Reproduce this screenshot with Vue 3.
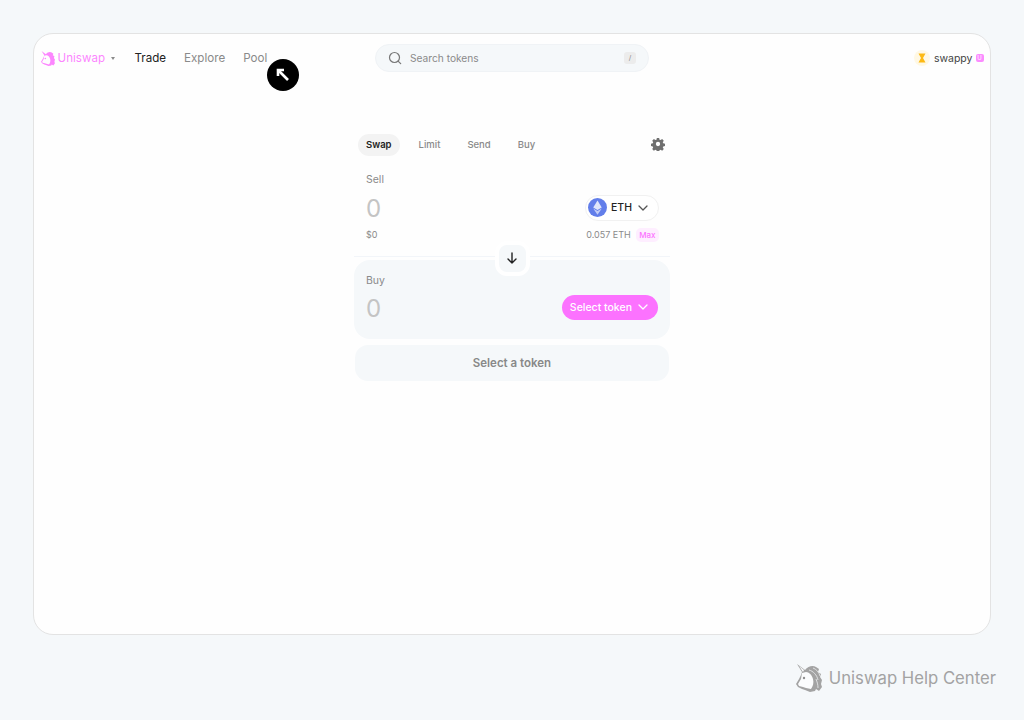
<script setup>
const tabs = ["Swap", "Limit", "Send", "Buy"];
</script>

<template>
  <div class="page">
    <div class="window">
      <header class="topbar">
        <nav class="nav">
          <div class="brand">
            <svg class="brand-logo" viewBox="0 0 26 28" width="14" height="15">
              <path fill="#fc72ff" d="M1 0l8 6c3-4 8-5 11-3l3 2-1 3 3 2-1 3 2 3-1 4 1 3-3 4-3-2-1 2-5 1-5-2-3-1-4-2-2-3 3-5 2-4 1-3z" />
              <path fill="#fff" d="M6 9l4-1c3 0 6 3 7 7 1 4 0 7-2 10l-5-1-3-1-4-1-1-2 3-5z" />
              <circle cx="8" cy="14" r="1.500" fill="#fc72ff" />
            </svg>
            <span>Uniswap</span>
            <i class="caret"></i>
          </div>
          <a class="nav-link active">Trade</a>
          <a class="nav-link">Explore</a>
          <a class="nav-link">Pool</a>
        </nav>

        <div class="search">
          <svg viewBox="0 0 14 14" width="14" height="14" fill="none" stroke="#777" stroke-width="1.200" stroke-linecap="round">
            <circle cx="6.500" cy="6.500" r="5" />
            <path d="M10.300 10.300l2.400 2.400" />
          </svg>
          <span class="search-text">Search tokens</span>
          <span class="slash">/</span>
        </div>

        <div class="account">
          <span class="avatar">
            <svg viewBox="0 0 16 16" width="16" height="16">
              <circle cx="8" cy="8" r="8" fill="#fff8e4" />
              <path d="M4.500 3.500h7L9 8l2.500 4.500h-7L7 8z" fill="#fdb913" />
            </svg>
          </span>
          <span class="account-name">swappy</span>
          <span class="u-badge">U</span>
        </div>
      </header>

      <!-- mouse pointer from the tutorial -->
      <div class="pointer">
        <svg viewBox="0 0 32 32" width="32" height="32" fill="none" stroke="#fff" stroke-width="2.600">
          <path d="M11 17v-6h6" />
          <path d="M11 11l10 10" />
        </svg>
      </div>

      <main class="swap">
        <div class="tabs">
          <span v-for="(t, i) in tabs" :key="t" class="tab" :class="{ selected: i === 0 }">{{ t }}</span>
          <svg class="gear" viewBox="0 0 24 24" width="14" height="14">
            <path fill="#6f6f6f" fill-rule="evenodd" d="M10 1.500h4l.6 3 1.900.8 2.600-1.700 2.800 2.800-1.700 2.600.8 1.900 3 .6v4l-3 .6-.8 1.900 1.700 2.600-2.800 2.800-2.600-1.700-1.900.8-.6 3h-4l-.6-3-1.900-.8-2.600 1.700-2.800-2.800 1.700-2.600-.8-1.900-3-.6v-4l3-.6.8-1.900-1.700-2.600 2.800-2.800 2.600 1.700 1.900-.8zM12 8.300a3.700 3.700 0 100 7.400 3.700 3.700 0 000-7.400z" />
          </svg>
        </div>

        <section class="panel sell">
          <div class="label">Sell</div>
          <div class="amount-row">
            <span class="amount">0</span>
            <button class="token-pill">
              <svg viewBox="0 0 20 20" width="19" height="19">
                <circle cx="10" cy="10" r="10" fill="#627eea" />
                <path d="M10 2.500L5.500 10 10 12.600l4.500-2.600z" fill="#dfe5fb" />
                <path d="M10 13.600L5.500 11 10 17.500l4.500-6.500z" fill="#c3cdf7" />
              </svg>
              <span>ETH</span>
              <svg class="chev" viewBox="0 0 12 12" width="12" height="12" fill="none" stroke="#555" stroke-width="1.300" stroke-linecap="round" stroke-linejoin="round">
                <path d="M2 4l4 4 4-4" />
              </svg>
            </button>
          </div>
          <div class="meta-row">
            <span>$0</span>
            <span class="balance">0.057 ETH <b class="max">Max</b></span>
          </div>
        </section>

        <section class="panel buy">
          <div class="flip">
            <svg viewBox="0 0 14 14" width="14" height="14" fill="none" stroke="#222" stroke-width="1.400" stroke-linecap="round" stroke-linejoin="round">
              <path d="M7 2v10M3 8l4 4 4-4" />
            </svg>
          </div>
          <div class="label">Buy</div>
          <div class="amount-row">
            <span class="amount">0</span>
            <button class="select-btn">
              <span>Select token</span>
              <svg viewBox="0 0 12 12" width="12" height="12" fill="none" stroke="#fff" stroke-width="1.300" stroke-linecap="round" stroke-linejoin="round">
                <path d="M2 4l4 4 4-4" />
              </svg>
            </button>
          </div>
        </section>

        <button class="submit">Select a token</button>
      </main>
    </div>

    <footer class="footer">
      <svg viewBox="0 0 26 28" width="26" height="28">
        <path fill="#a3a3a3" d="M1 0l8 6c3-4 8-5 11-3l3 2-1 3 3 2-1 3 2 3-1 4 1 3-3 4-3-2-1 2-5 1-5-2-3-1-4-2-2-3 3-5 2-4 1-3z" />
        <path fill="#fbfcfd" d="M6 9l4-1c3 0 6 3 7 7 1 4 0 7-2 10l-5-1-3-1-4-1-1-2 3-5z" />
        <path fill="#fbfcfd" d="M3 2l5 4-1 2z" />
        <path fill="none" stroke="#e4e6e8" stroke-width="0.900" d="M13 6c4 1 8 5 9 10M17 4c3 1 6 4 7 8M20 15c1 3 2 5 2 9" />
        <circle cx="8" cy="14" r="1.200" fill="#8f8f8f" />
      </svg>
      <span>Uniswap Help Center</span>
    </footer>
  </div>
</template>

<style scoped>
.page {
  width: 1024px;
  height: 720px;
  box-sizing: border-box;
  padding-top: 33px;
  background: #f5f8fa;
  font-family: Inter, "Liberation Sans", sans-serif;
  overflow: hidden;
}

.window {
  position: relative;
  width: 958px;
  height: 602px;
  margin-left: 33px;
  box-sizing: border-box;
  background: #fefefe;
  border: 1.500px solid #e3e3e3;
  border-radius: 20px;
}

/* top bar */
.topbar {
  display: grid;
  grid-template-columns: 1fr 274px 1fr;
  align-items: center;
  height: 28px;
  margin-top: 9.500px;
  padding: 0 6.500px;
}

.nav {
  display: flex;
  align-items: center;
  padding-top: 1px;
  font-size: 11.600px;
}

.brand {
  display: flex;
  align-items: center;
  gap: 3px;
  width: 94px;
  color: #fc72ff;
  opacity: 0.85;
}

.caret {
  width: 0;
  height: 0;
  margin-left: 3px;
  border-left: 2.500px solid transparent;
  border-right: 2.500px solid transparent;
  border-top: 3px solid #777;
}

.nav-link {
  margin-right: 18px;
  color: #8a8a8a;
}

.nav-link.active {
  color: #222;
}

.search {
  display: flex;
  align-items: center;
  gap: 8px;
  height: 28px;
  padding: 0 12px;
  background: #f5f8fa;
  border: 1px solid #f0f3f6;
  border-radius: 14px;
  box-sizing: border-box;
}

.search-text {
  flex: 1;
  font-size: 10.200px;
  color: #8a8a8a;
}

.slash {
  width: 12px;
  height: 12px;
  border-radius: 3px;
  background: #ececec;
  font-size: 7px;
  line-height: 12px;
  text-align: center;
  color: #888;
}

.account {
  display: flex;
  align-items: center;
  justify-content: flex-end;
  gap: 4px;
  padding-top: 1px;
  font-size: 10.500px;
  color: #444;
}

.avatar {
  display: flex;
}

.u-badge {
  width: 8px;
  height: 8px;
  margin-left: -1px;
  border-radius: 2px;
  background: #fc8cff;
  color: #fff;
  font-size: 6px;
  line-height: 8px;
  text-align: center;
}

.pointer {
  position: absolute;
  left: 232.500px;
  top: 24.500px;
  width: 32px;
  height: 32px;
  border-radius: 50%;
  background: #000;
}

/* swap widget */
.swap {
  width: 316px;
  margin: 62px auto 0;
}

.tabs {
  display: flex;
  align-items: center;
  height: 22px;
  padding-left: 4px;
  font-size: 9.500px;
  font-weight: 500;
  color: #8a8a8a;
}

.tab {
  padding: 0 8px;
  line-height: 22px;
  margin-right: 11px;
}

.tab.selected {
  background: #f3f3f3;
  border-radius: 11px;
  color: #222;
  font-weight: 600;
}

.gear {
  margin: -2px 5px 0 auto;
}

.panel {
  position: relative;
  box-sizing: border-box;
  padding: 0 12px;
}

.label {
  font-size: 10.500px;
  color: #8a8a8a;
}

.sell {
  height: 95px;
  margin-top: 6px;
  padding-top: 11px;
  border-bottom: 1px solid #f2f5f9;
}

.amount-row {
  display: flex;
  align-items: center;
  justify-content: space-between;
}

.sell .amount-row {
  margin-top: 9px;
  height: 26px;
}

.amount {
  font-size: 24px;
  line-height: 26px;
  color: #c4c4c4;
}

.sell .amount {
  position: relative;
  top: 1px;
}

.token-pill {
  display: flex;
  align-items: center;
  gap: 4px;
  width: 74px;
  height: 26px;
  margin-right: -1px;
  padding: 0 2px;
  background: #fff;
  border: 1px solid #f1f1f1;
  border-radius: 13px;
  box-sizing: border-box;
  font-family: inherit;
  font-size: 10.500px;
  font-weight: 500;
  color: #222;
}

.chev {
  margin-left: 1px;
}

.meta-row {
  display: flex;
  justify-content: space-between;
  align-items: center;
  margin: 7px -1px 0 0;
  font-size: 9px;
  color: #8a8a8a;
}

.balance {
  display: flex;
  align-items: center;
  gap: 5px;
}

.max {
  padding: 2px 3.500px;
  border-radius: 5px;
  background: #feeeff;
  color: #fc72ff;
  font-size: 8px;
  font-weight: 500;
}

.buy {
  height: 79px;
  margin-top: 3px;
  padding-top: 14px;
  background: #f5f8fa;
  border-radius: 16px;
}

.buy .amount-row {
  margin-top: 9px;
  height: 26px;
}

.flip {
  position: absolute;
  left: 140.500px;
  top: -19px;
  display: flex;
  align-items: center;
  justify-content: center;
  width: 35px;
  height: 35px;
  box-sizing: border-box;
  background: #f5f8fa;
  border: 4px solid #fff;
  border-radius: 12px;
}

.select-btn {
  display: flex;
  align-items: center;
  gap: 5px;
  height: 25px;
  margin-top: -3px;
  padding: 0 9px 0 8px;
  background: #fc72ff;
  border: none;
  border-radius: 13px;
  font-family: inherit;
  font-size: 10.500px;
  font-weight: 500;
  color: #fff;
}

.submit {
  display: block;
  width: 314px;
  height: 36px;
  margin: 6px auto 0;
  background: #f5f8fa;
  border: none;
  border-radius: 13px;
  font-family: inherit;
  font-size: 11.500px;
  font-weight: 600;
  color: #888;
}

.footer {
  display: flex;
  align-items: center;
  justify-content: flex-end;
  gap: 7px;
  margin-top: 29px;
  padding-right: 28px;
  font-size: 16.700px;
  color: #a3a3a3;
}
</style>

<style>
body {
  margin: 0;
}
</style>
